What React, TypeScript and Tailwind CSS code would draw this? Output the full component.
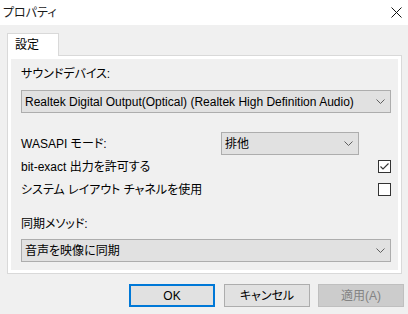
const font = "font-['Liberation_Sans','Noto_Sans_CJK_JP',sans-serif] [font-feature-settings:'palt']"

function Chevron() {
  return (
    <svg width="9" height="6" viewBox="0 0 9 6" className="shrink-0">
      <polyline points="0.5,0.5 4.5,4.5 8.5,0.5" fill="none" stroke="#5f5f5f" strokeWidth="1" />
    </svg>
  )
}

function Combo({ value, className }: { value: string; className?: string }) {
  return (
    <div
      className={`flex h-[23px] items-center justify-between border border-[#adadad] bg-[#e1e1e1] pl-[3px] pr-[5px] text-[12px] text-black ${className ?? ''}`}
    >
      <span className="leading-none">{value}</span>
      <Chevron />
    </div>
  )
}

function CheckBox({ checked }: { checked: boolean }) {
  return (
    <div className="flex h-[13px] w-[13px] items-center justify-center border border-[#333333] bg-white">
      {checked ? (
        <svg width="11" height="11" viewBox="0 0 11 11">
          <polyline points="1.5,5.5 4,8 9.5,2.5" fill="none" stroke="#333333" strokeWidth="1.1" />
        </svg>
      ) : null}
    </div>
  )
}

export default function App() {
  return (
    <div className={`flex h-[314px] w-[408px] flex-col bg-[#f0f0f0] ${font}`}>
      <div className="flex h-[25px] items-center justify-between bg-white pl-[3px] pr-[6px]">
        <span className="text-[12px] leading-none text-[#1a1a1a]">プロパティ</span>
        <svg width="11" height="11" viewBox="0 0 11 11">
          <path d="M0.5 0.5 L10.5 10.5 M10.5 0.5 L0.5 10.5" stroke="#111" strokeWidth="1" />
        </svg>
      </div>

      <div className="mt-[8px] ml-[7px] w-[395px]">
        <div className="relative z-10 -mb-px flex h-[23px] w-[52px] items-center border border-b-0 border-[#d9d9d9] bg-white pl-[7px] text-[12px] text-black">
          設定
        </div>
        <div className="h-[219px] border border-[#d9d9d9] bg-white p-[3px]">
          <div className="flex h-full flex-col bg-[#f0f0f0] pl-[10px] pr-[7px] pt-[7px] text-[12px] text-black">
            <div className="flex h-[16px] items-center">サウンドデバイス:</div>
            <Combo
              className="mt-[8px]"
              value="Realtek Digital Output(Optical) (Realtek High Definition Audio)"
            />

            <div className="mt-[19px] flex h-[23px] items-center">
              <span className="w-[200px]">WASAPI モード:</span>
              <Combo className="w-[138px]" value="排他" />
            </div>

            <div className="mt-[5px] flex h-[13px] items-center justify-between">
              <span>bit-exact 出力を許可する</span>
              <CheckBox checked />
            </div>

            <div className="mt-[10px] flex h-[13px] items-center justify-between">
              <span>システム レイアウト チャネルを使用</span>
              <CheckBox checked={false} />
            </div>

            <div className="mt-[20px] flex h-[16px] items-center">同期メソッド:</div>
            <Combo className="mt-[7px]" value="音声を映像に同期" />
          </div>
        </div>
      </div>

      <div className="mt-[10px] flex justify-end gap-[9px] pr-[4px] text-[12px]">
        <button className="flex h-[23px] w-[86px] items-center justify-center border-2 border-[#0078d7] bg-[#e1e1e1] text-black">
          OK
        </button>
        <button className="flex h-[23px] w-[86px] items-center justify-center border border-[#adadad] bg-[#e1e1e1] text-black">
          キャンセル
        </button>
        <button className="-ml-px flex h-[23px] w-[86px] items-center justify-center border border-[#bfbfbf] bg-[#cccccc] text-[#838383]">
          適用(A)
        </button>
      </div>
    </div>
  )
}
